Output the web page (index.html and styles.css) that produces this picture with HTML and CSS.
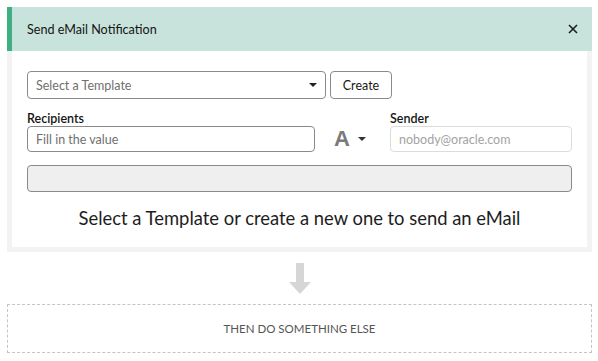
FILE: index.html
```html
<!DOCTYPE html>
<html lang="en">
<head>
    <meta charset="UTF-8">
    <meta name="viewport" content="width=device-width, initial-scale=1.0">
    <title>Send eMail Notification</title>
    <link rel="stylesheet" href="styles.css">
</head>
<body>
    <div class="dialog">
        <div class="dialog-header">
            <div class="dialog-title">Send eMail Notification</div>
            <svg class="close" width="10" height="10" viewBox="0 0 10 10">
                <path d="M1 1 L9 9 M9 1 L1 9" stroke="#1d1d1d" stroke-width="1.6" fill="none"/>
            </svg>
        </div>

        <div class="dialog-frame">
            <div class="dialog-body">
                <div class="template-row">
                    <div class="select">
                        <span class="placeholder">Select a Template</span>
                        <span class="caret"></span>
                    </div>
                    <button class="btn">Create</button>
                </div>

                <div class="address-row">
                    <div class="field recipients">
                        <label>Recipients</label>
                        <div class="input">
                            <span class="placeholder">Fill in the value</span>
                        </div>
                    </div>
                    <div class="format">
                        <span class="format-a">A</span>
                        <span class="caret"></span>
                    </div>
                    <div class="field sender">
                        <label>Sender</label>
                        <div class="input input-disabled">
                            <span class="placeholder">nobody@oracle.com</span>
                        </div>
                    </div>
                </div>

                <div class="subject-bar"></div>

                <div class="hint">Select a Template or create a new one to send an eMail</div>
            </div>
        </div>
    </div>

    <div class="flow-arrow">
        <svg width="22" height="31" viewBox="0 0 22 31">
            <path d="M7 0 H15 V19 H22 L11 31 L0 19 H7 Z" fill="#d6d6d6"/>
        </svg>
    </div>

    <div class="next-step">THEN DO SOMETHING ELSE</div>
</body>
</html>
```

FILE: styles.css
```css
* {
    margin: 0;
    padding: 0;
    box-sizing: border-box;
}

body {
    font-family: 'Lato', 'Liberation Sans', sans-serif;
    background: white;
    color: #161513;
    padding: 7px 6px 0 7px;
}

.dialog {
    width: 585px;
}

.dialog-header {
    height: 44px;
    background: #c7e3dc;
    border-left: 5px solid #3fae83;
    display: flex;
    align-items: center;
    justify-content: space-between;
    padding: 0 14px 0 15px;
}

.dialog-title {
    font-size: 12.6px;
}

.dialog-frame {
    background: #f3f3f3;
    padding: 0 5px 5px;
}

.dialog-body {
    background: white;
    height: 196px;
    padding: 20px 15px 0;
}

.template-row {
    display: flex;
    gap: 4px;
}

.select {
    width: 299px;
    height: 28px;
    border: 1px solid #8a8a8a;
    border-radius: 4px;
    display: flex;
    align-items: center;
    justify-content: space-between;
    padding: 0 8px 0 8px;
}

.placeholder {
    font-size: 12.5px;
    color: #6f6f6f;
}

.caret {
    width: 0;
    height: 0;
    border-left: 4px solid transparent;
    border-right: 4px solid transparent;
    border-top: 4px solid #222;
}

.btn {
    width: 62px;
    height: 28px;
    border: 1px solid #8a8a8a;
    border-radius: 4px;
    background: white;
    font-family: inherit;
    font-size: 12.5px;
    color: #161513;
}

.address-row {
    display: flex;
    align-items: flex-end;
    margin-top: 13px;
}

.field label {
    display: block;
    font-size: 12.5px;
    font-weight: 600;
    height: 14px;
    line-height: 14px;
}

.input {
    height: 26px;
    border: 1px solid #8a8a8a;
    border-radius: 4px;
    display: flex;
    align-items: center;
    padding: 0 8px;
}

.recipients {
    width: 288px;
}

.format {
    width: 75px;
    height: 26px;
    display: flex;
    align-items: center;
    gap: 8px;
    padding-left: 19px;
}

.format-a {
    font-family: 'Liberation Sans', sans-serif;
    font-size: 22px;
    font-weight: bold;
    color: #7a7a7a;
}

.format .caret {
    border-top-color: #333;
}

.sender {
    width: 182px;
}

.input-disabled {
    border-color: #dcdcdc;
}

.input-disabled .placeholder {
    color: #a3a3a3;
}

.subject-bar {
    height: 27px;
    margin-top: 13px;
    background: #efeff0;
    border: 1px solid #8a8a8a;
    border-radius: 4px;
}

.hint {
    text-align: center;
    font-size: 18.4px;
    margin-top: 15px;
    color: #1d1d1d;
}

.flow-arrow {
    width: 585px;
    display: flex;
    justify-content: center;
    padding: 11px 0 10px;
}

.flow-arrow svg {
    display: block;
}

.next-step {
    width: 585px;
    height: 49px;
    border: 1px dashed #c4c4c4;
    display: flex;
    align-items: center;
    justify-content: center;
    font-size: 11.5px;
    color: #555;
}
```
